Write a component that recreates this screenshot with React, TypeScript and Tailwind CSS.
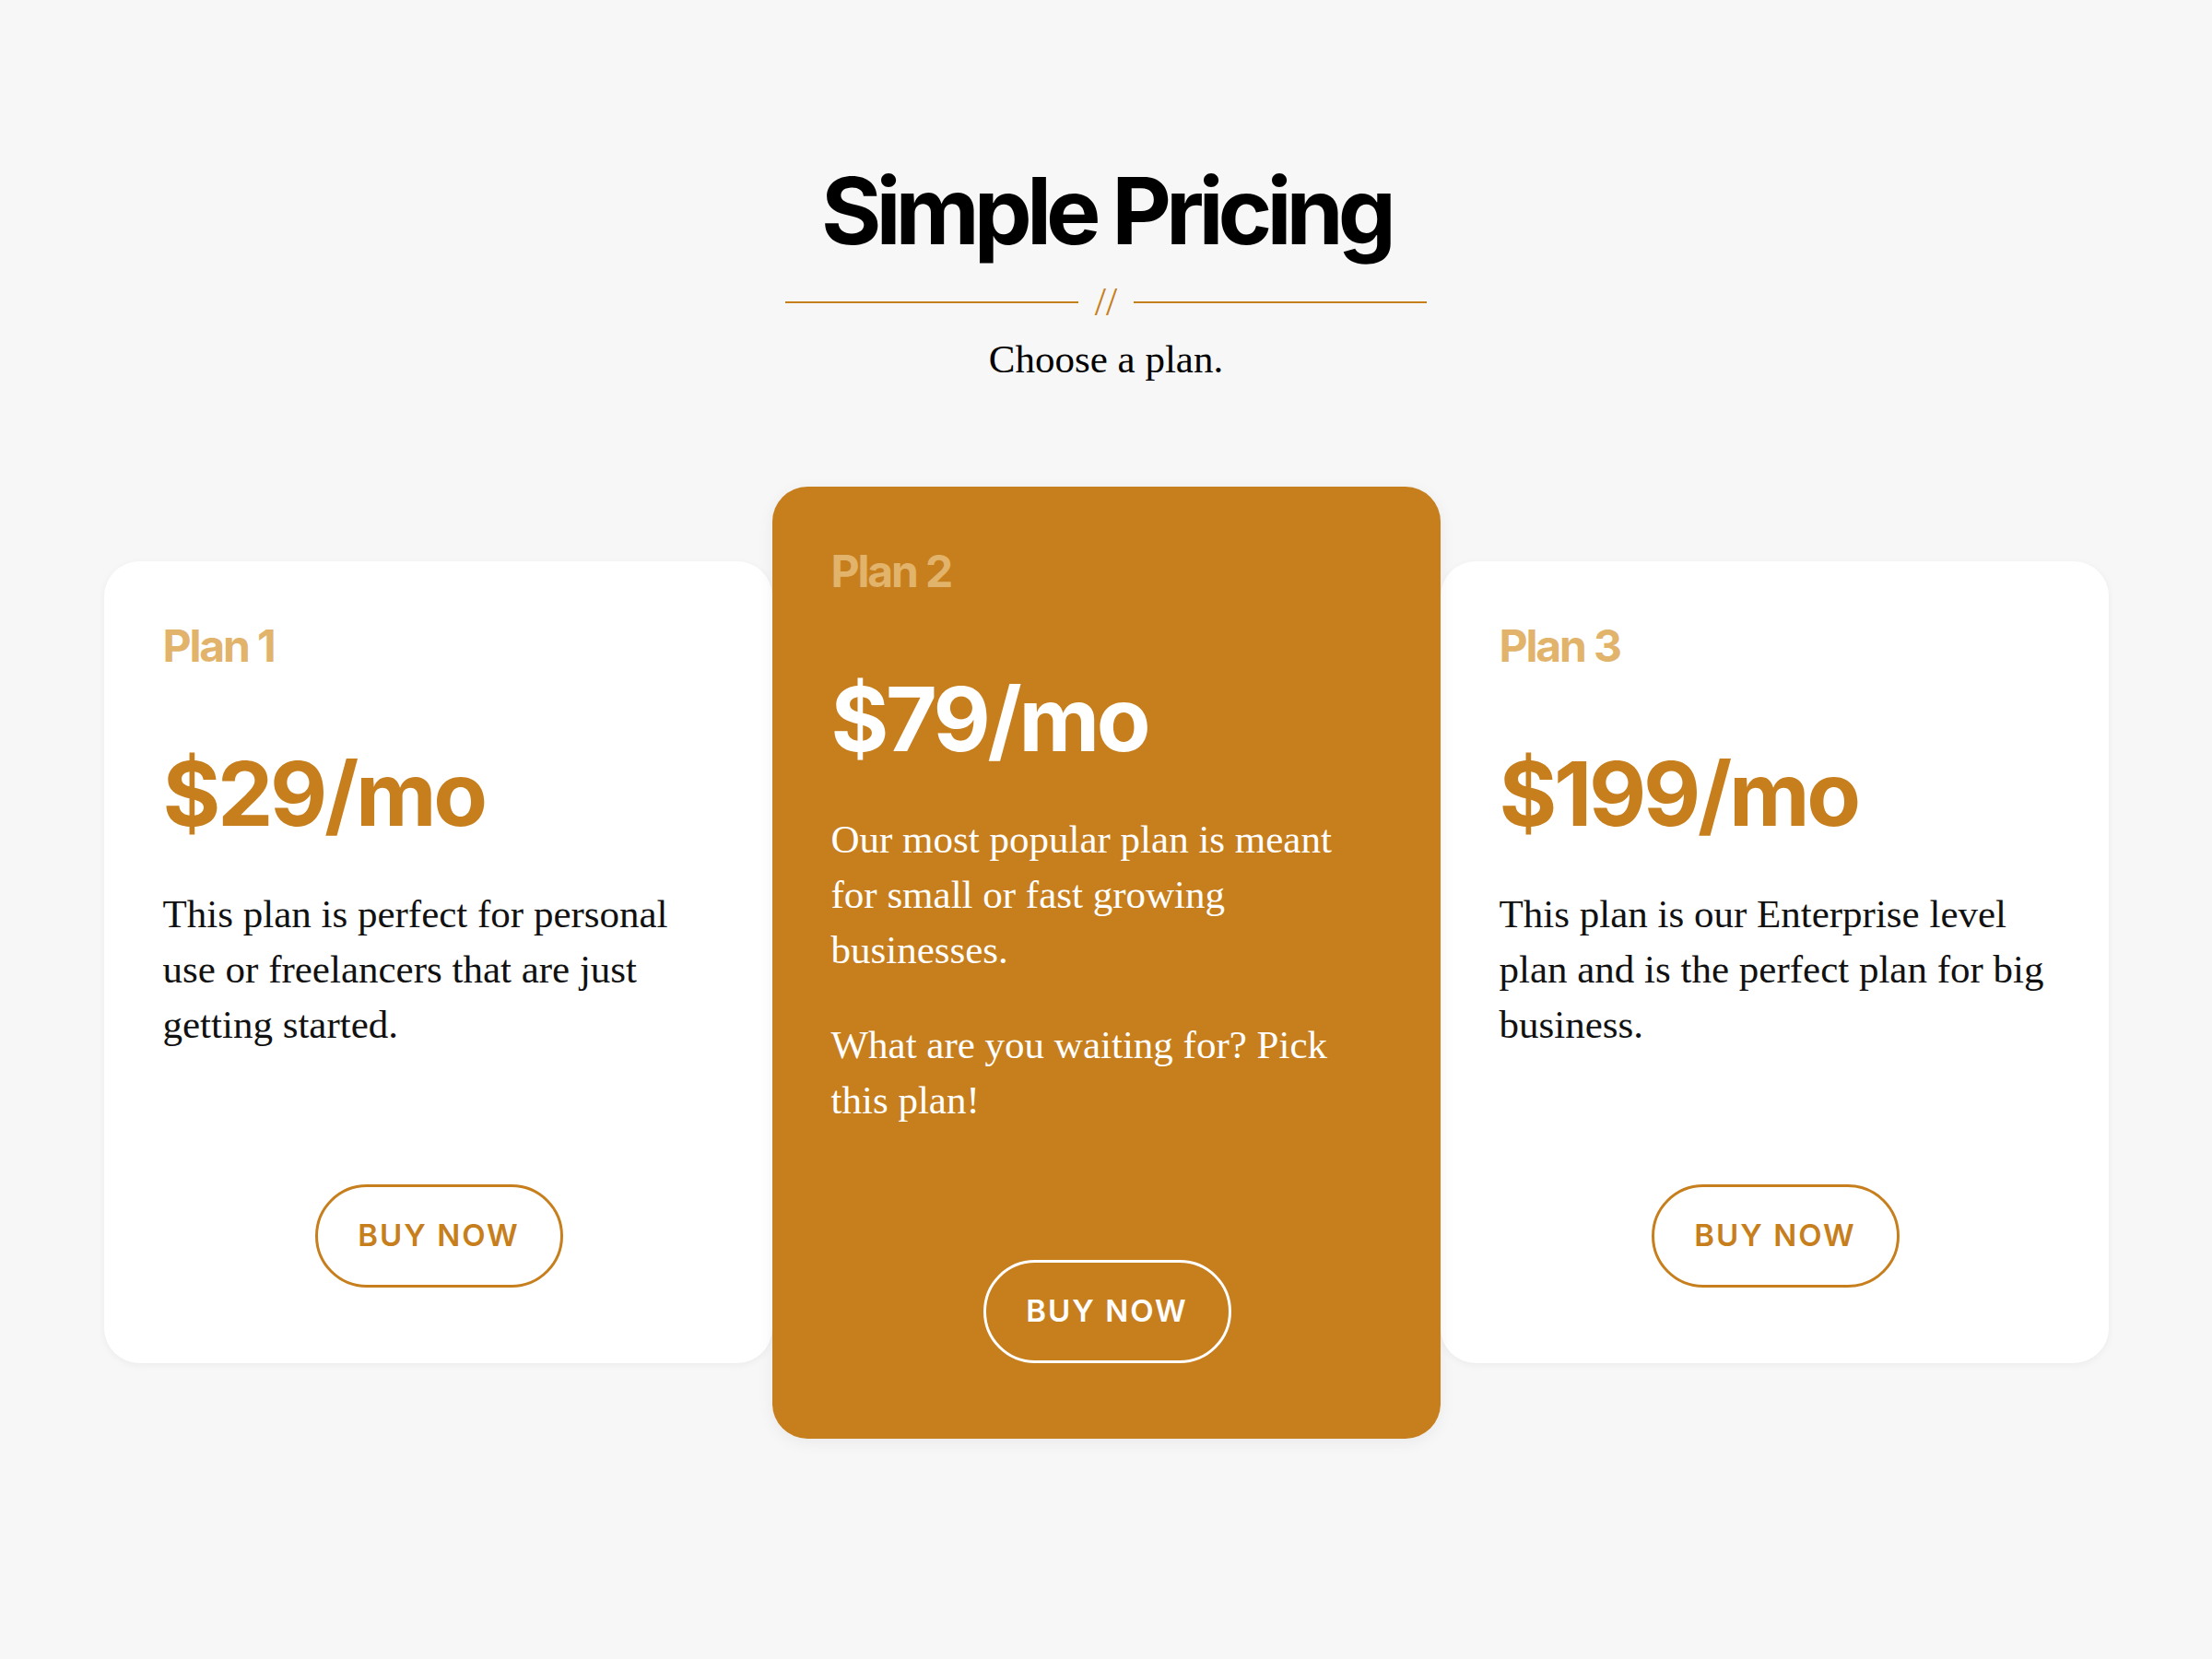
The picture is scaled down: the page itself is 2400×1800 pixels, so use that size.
const plans = [
  {
    name: "Plan 1",
    price: "$29/mo",
    text: ["This plan is perfect for personal use or freelancers that are just getting started."],
    featured: false,
  },
  {
    name: "Plan 2",
    price: "$79/mo",
    text: [
      "Our most popular plan is meant for small or fast growing businesses.",
      "What are you waiting for? Pick this plan!",
    ],
    featured: true,
  },
  {
    name: "Plan 3",
    price: "$199/mo",
    text: ["This plan is our Enterprise level plan and is the perfect plan for big business."],
    featured: false,
  },
];

type Plan = (typeof plans)[number];

function PlanCard({ plan }: { plan: Plan }) {
  const { featured } = plan;
  return (
    <article
      className={`flex w-[725px] flex-col rounded-[38px] pl-16 pr-[62px] pt-[68px] pb-[82px] ${
        featured
          ? "relative z-10 bg-[#c77f1e] text-white shadow-[0_4px_18px_rgba(0,0,0,0.06)]"
          : "bg-white text-[#111] shadow-[0_2px_8px_rgba(0,0,0,0.05)]"
      }`}
    >
      <h3 className="font-['Inter',sans-serif] text-[48px] leading-none font-bold tracking-[-0.045em] text-[#e2b36b]">
        {plan.name}
      </h3>
      <p
        className={`mt-[88px] font-['Inter',sans-serif] text-[96px] leading-none font-bold tracking-[-0.035em] ${
          featured ? "text-white" : "text-[#c77f1e]"
        }`}
      >
        {plan.price}
      </p>
      <div className="mt-[53px] space-y-[43px] font-['Liberation_Serif',serif] text-[43px] leading-[60px]">
        {plan.text.map((line) => (
          <p key={line}>{line}</p>
        ))}
      </div>
      <div className="mt-[143px] flex justify-center">
        <button
          className={`h-[112px] w-[269px] rounded-full border-[3px] font-['Inter',sans-serif] text-[33px] font-semibold tracking-[0.06em] ${
            featured ? "border-white text-white" : "border-[#c77f1e] text-[#c77f1e]"
          }`}
        >
          BUY NOW
        </button>
      </div>
    </article>
  );
}

export default function App() {
  return (
    <div className="min-h-screen bg-[#f7f7f7] pt-[179px] pb-[200px]">
      <header className="flex flex-col items-center">
        <h1 className="font-['Inter',sans-serif] text-[100px] leading-none font-bold tracking-[-0.06em] text-black">
          Simple Pricing
        </h1>
        <div className="mt-[29px] flex h-[40px] items-center gap-[18px]">
          <span className="h-[2px] w-[318px] bg-[#c77f1e]" />
          <span className="font-['Liberation_Serif',serif] text-[44px] leading-none text-[#c77f1e]">//</span>
          <span className="h-[2px] w-[318px] bg-[#c77f1e]" />
        </div>
        <p className="mt-[10px] font-['Liberation_Serif',serif] text-[43px] leading-[1.5] text-black">
          Choose a plan.
        </p>
      </header>
      <div className="mx-auto mt-[105px] flex w-[2175px] items-center">
        {plans.map((plan) => (
          <PlanCard key={plan.name} plan={plan} />
        ))}
      </div>
    </div>
  );
}
